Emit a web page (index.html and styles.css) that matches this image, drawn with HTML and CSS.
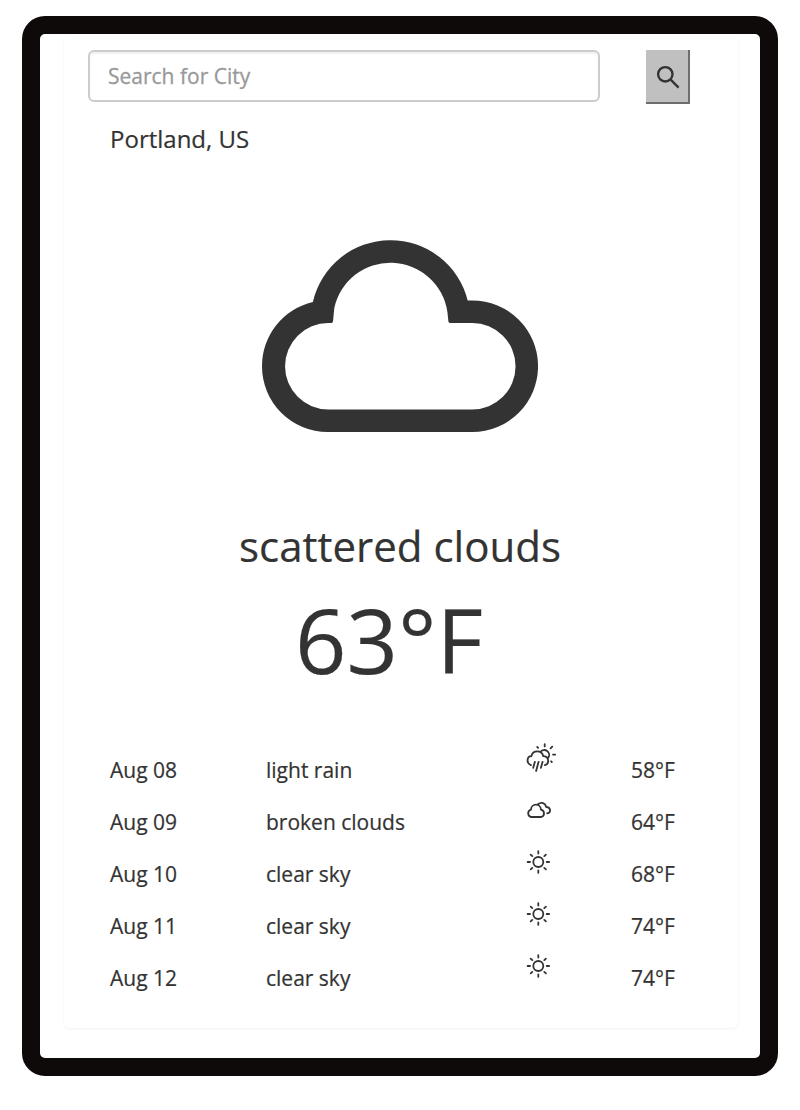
FILE: index.html
```html
<!DOCTYPE html>
<html lang="en">
<head>
<meta charset="utf-8">
<title>Weather</title>
<link rel="stylesheet" href="styles.css">
</head>
<body>
<svg class="defs" width="0" height="0">
  <symbol id="sun" viewBox="0 0 32 32">
    <circle cx="12.3" cy="12" r="5"/>
    <path d="M12.3 1.2v2.4M12.3 20.4v2.4M1.6 12h2.4M20.7 12h2.4M4.7 4.6l1.6 1.5M18.3 17.9l1.6 1.5M4.7 19.4l1.6-1.5M18.3 6.1l1.6-1.5"/>
  </symbol>
</svg>
<div class="device">
  <main class="panel">
    <form class="search">
      <input class="search-input" type="text" placeholder="Search for City">
      <button class="search-button" type="button" aria-label="Search">
        <svg class="search-icon" viewBox="0 0 24 24"><circle cx="9.3" cy="9.3" r="7.2"/><path d="M14.4 14.4l8.2 8.2"/></svg>
      </button>
    </form>
    <div class="city">Portland, US</div>
    <svg class="cloud" viewBox="262 240 276 192">
      <path fill-rule="evenodd" d="M327.7 432A65.7 65.7 0 0 1 262 366.3A65.7 65.7 0 0 1 312.9 302A79.6 79.6 0 0 1 467.7 300.5H472.3A65.75 65.75 0 0 1 472.3 432ZM328.3 409.5H472.3A43.25 43.25 0 0 0 472.3 323H450Q448.6 323 448.4 321.6L447.4 312A57.5 57.5 0 0 0 334.3 308L333 321.6Q332.8 323 331.4 323H328.3A43.25 43.25 0 0 0 328.3 409.5Z"/>
    </svg>
    <div class="condition">scattered clouds</div>
    <div class="temperature">63°F</div>
    <div class="forecast">
      <div class="day"><span>Aug 08</span><span>light rain</span>
        <svg class="icon" viewBox="0 0 32 32"><path d="M4.9 19.1C0.1 17.4 0.7 10.4 5.3 10.2C7 4 15.6 3.8 17.3 10.2C23.4 10.4 23.6 18 18.8 19.1M14.3 6A4.9 4.9 0 1 1 22.2 11.8M8.9 15.8l-1.7 6M12.6 15.8l-2.5 9.2M16.6 15.8l-1.7 6M18.7-1.8v2.2M11.3 1l.8.8M26.2.7l-1.6 1.6M27 8.6h2.2M25.1 15.3l.7.7"/></svg>
        <span>58°F</span></div>
      <div class="day"><span>Aug 09</span><span>broken clouds</span>
        <svg class="icon" viewBox="0 0 32 32"><path d="M5.3 19A3.8 3.8 0 0 1 5 11.6A4.9 4.9 0 0 1 14.9 11.6A3.8 3.8 0 0 1 15.2 19ZM12 6.2C15 3.6 19.6 5.1 20 8.8C25 9 25.4 14.6 21.2 15.4"/></svg>
        <span>64°F</span></div>
      <div class="day"><span>Aug 10</span><span>clear sky</span><svg class="icon"><use href="#sun"/></svg><span>68°F</span></div>
      <div class="day"><span>Aug 11</span><span>clear sky</span><svg class="icon"><use href="#sun"/></svg><span>74°F</span></div>
      <div class="day"><span>Aug 12</span><span>clear sky</span><svg class="icon"><use href="#sun"/></svg><span>74°F</span></div>
    </div>
  </main>
</div>
</body>
</html>
```
FILE: styles.css
```css
* { box-sizing: border-box; }
body {
  margin: 0;
  padding: 16px 22px 34px;
  background: #fff;
  color: #333;
  font-family: "Open Sans", "Noto Sans", sans-serif;
  -webkit-text-stroke: .2px;
}
.defs { display: block; }
.device {
  height: 1060px;
  padding: 0 24px;
  border: 18px solid #0d0a09;
  border-radius: 23px;
  background: #fff;
}
.panel {
  width: 674px;
  height: 994px;
  padding: 16px 24px 0;
  border-radius: 6px;
  box-shadow: 0 1px 3px rgba(0, 0, 0, .05);
}
.search { display: flex; gap: 46px; height: 54px; }
.search-input {
  width: 512px;
  height: 52px;
  padding: 0 18px 1px;
  border: 2px solid #ccc;
  border-radius: 6px;
  box-shadow: inset 0 2px 2px rgba(0, 0, 0, .06);
  background: #fff;
  font: 21px "Open Sans", sans-serif;
}
.search-input::placeholder { color: #999; opacity: 1; -webkit-text-stroke: .3px #999; }
.search-button {
  width: 44px;
  height: 54px;
  padding: 0;
  border: solid;
  border-width: 0 2px 2px 0;
  border-color: #c0c0c0 #6d6d6d #6d6d6d #c0c0c0;
  background: #c0c0c0;
}
.search-icon {
  display: block;
  width: 24px;
  height: 24px;
  margin: 1px 0 0 10px;
  overflow: visible;
  fill: none;
  stroke: #333;
  stroke-width: 2.4;
}
.city { padding-left: 22px; margin-top: 18px; height: 34px; font-size: 24px; line-height: 34px; }
.cloud { display: block; width: 276px; height: 192px; margin: 84px 0 0 174px; fill: #333; }
.condition { margin: 84px 26px 0 24px; text-align: center; font-size: 42px; line-height: 60px; }
.temperature { height: 124px; margin: 3px 26px 0 2px; text-align: center; font-size: 90px; line-height: 120px; }
.forecast { display: grid; grid-auto-rows: 52px; margin: 41px 22px 0; }
.day { display: grid; grid-template-columns: 156px 260px 105px 1fr; font-size: 21px; line-height: 52px; }
.icon { width: 32px; height: 32px; margin-top: 2px; overflow: visible; fill: none; stroke: #333; stroke-width: 1.8; stroke-linecap: round; stroke-linejoin: round; }
```
